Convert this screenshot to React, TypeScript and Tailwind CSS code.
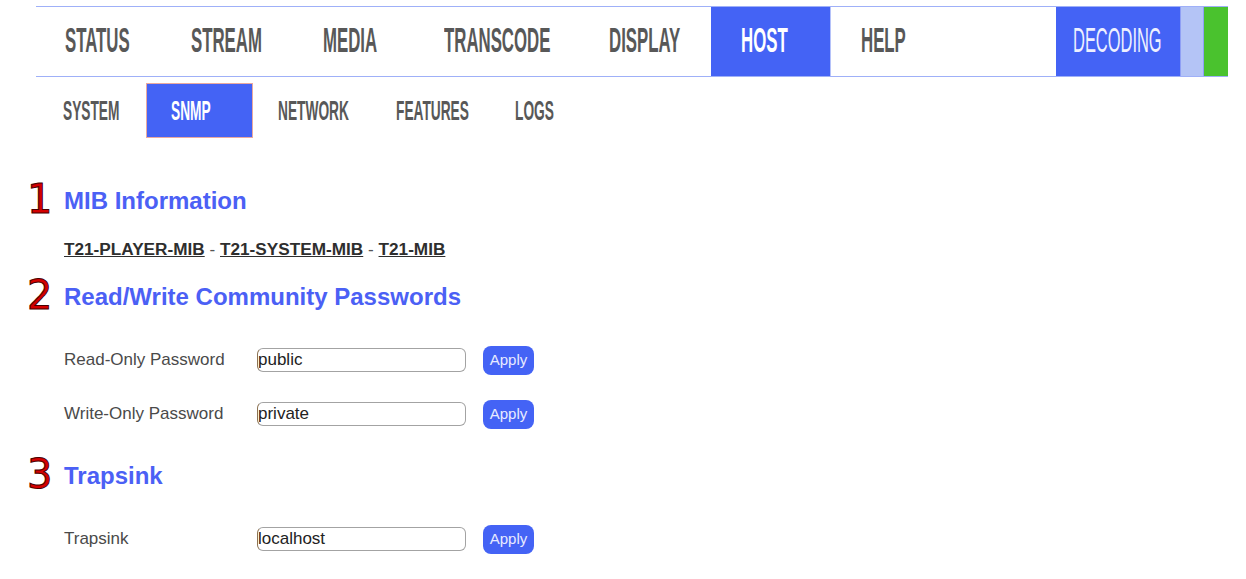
import type { ReactNode } from "react";

type NavItem = { label: string; width: string; pad: string; active?: boolean };

const topNav: NavItem[] = [
  { label: "STATUS", width: "w-[125px]", pad: "pl-[29px]" },
  { label: "STREAM", width: "w-[132px]", pad: "pl-[30px]" },
  { label: "MEDIA", width: "w-[121px]", pad: "pl-[30px]" },
  { label: "TRANSCODE", width: "w-[165px]", pad: "pl-[30px]" },
  { label: "DISPLAY", width: "w-[132px]", pad: "pl-[30px]" },
  { label: "HOST", width: "w-[119px]", pad: "pl-[30px]", active: true },
];

const subNav: NavItem[] = [
  { label: "SYSTEM", width: "w-[107px]", pad: "pl-[24px]" },
  { label: "SNMP", width: "w-[107px]", pad: "pl-[24px]", active: true },
  { label: "NETWORK", width: "w-[119px]", pad: "pl-[25px]" },
  { label: "FEATURES", width: "w-[119px]", pad: "pl-[24px]" },
  { label: "LOGS", width: "w-[83px]", pad: "pl-[24px]" },
];

function TopTab({ item }: { item: NavItem }) {
  return (
    <div
      className={`flex h-full shrink-0 items-center pb-[5px] ${item.width} ${item.pad} ${
        item.active ? "bg-[#4463f5] text-white" : "text-[#585858]"
      }`}
    >
      <span className="inline-block origin-left scale-x-[0.48] whitespace-nowrap text-[35px] font-bold leading-none">
        {item.label}
      </span>
    </div>
  );
}

function SubTab({ item }: { item: NavItem }) {
  return (
    <div
      className={`flex h-full shrink-0 items-center pt-[1px] ${item.width} ${item.pad} ${
        item.active
          ? "border border-[#eaa99f] bg-[#4463f5] text-white"
          : "text-[#585858]"
      }`}
    >
      <span className="inline-block origin-left scale-x-[0.49] whitespace-nowrap text-[28px] font-bold leading-none">
        {item.label}
      </span>
    </div>
  );
}

function SectionTitle({ num, children }: { num: string; children: ReactNode }) {
  return (
    <div className="flex h-[40px] items-center">
      <span className="w-[37px] pb-[4px] font-['DejaVu_Sans',sans-serif] text-[40px] leading-none text-[#d40000] [-webkit-text-stroke:1px_#4a0000]">
        {num}
      </span>
      <h2 className="text-[24px] font-bold text-[#4b60f5]">{children}</h2>
    </div>
  );
}

function FieldRow({ label, value }: { label: string; value: string }) {
  return (
    <div className="flex h-[30px] items-center pl-[37px]">
      <span className="w-[193px] text-[17px] text-[#4a4a4a]">{label}</span>
      <input
        readOnly
        value={value}
        className="h-[24px] w-[209px] rounded-[6px] border border-[#a3a3a3] border-l-[#8c7354] bg-white px-0 text-[17px] text-[#222] outline-none"
      />
      <button className="ml-[17px] h-[29px] w-[51px] rounded-[8px] bg-[#4463f5] text-[15px] text-[#e8ebff]">
        Apply
      </button>
    </div>
  );
}

export default function App() {
  return (
    <div className="h-[579px] w-[1246px] overflow-hidden bg-white font-['Liberation_Sans',Arial,sans-serif]">
      {/* main navigation */}
      <div className="ml-[36px] mt-[6px] flex h-[71px] w-[1192px] border-y border-[#9fb0f8]">
        {topNav.map((item) => (
          <TopTab key={item.label} item={item} />
        ))}
        <div className="flex h-full w-[226px] shrink-0 items-center border-l border-[#b5c2f9] pb-[5px] pl-[30px] text-[#585858]">
          <span className="inline-block origin-left scale-x-[0.48] text-[35px] font-bold leading-none">
            HELP
          </span>
        </div>
        <div className="flex h-full w-[124px] shrink-0 items-center bg-[#4463f5] pb-[5px] pl-[17px] text-[#eef0ff]">
          <span className="inline-block origin-left scale-x-[0.47] text-[35px] leading-none">
            DECODING
          </span>
        </div>
        <div className="h-full w-[24px] shrink-0 border-x border-[#8f9ff5] bg-[#b4c4f6]" />
        <div className="h-full w-[24px] shrink-0 bg-[#4ac22e]" />
      </div>

      {/* host sub navigation */}
      <div className="ml-[39px] mt-[6px] flex h-[55px]">
        {subNav.map((item) => (
          <SubTab key={item.label} item={item} />
        ))}
      </div>

      <div className="pl-[27px]">
        <div className="mt-[43px]">
          <SectionTitle num="1">MIB Information</SectionTitle>
        </div>
        <div className="mt-[18px] h-[20px] pl-[37px] text-[17.2px] leading-[20px] text-[#555]">
          <a className="font-bold text-[#2e2e2e] underline">T21-PLAYER-MIB</a> -{" "}
          <a className="font-bold text-[#2e2e2e] underline">T21-SYSTEM-MIB</a> -{" "}
          <a className="font-bold text-[#2e2e2e] underline">T21-MIB</a>
        </div>

        <div className="mt-[18px]">
          <SectionTitle num="2">Read/Write Community Passwords</SectionTitle>
        </div>
        <div className="mt-[28px]">
          <FieldRow label="Read-Only Password" value="public" />
        </div>
        <div className="mt-[24px]">
          <FieldRow label="Write-Only Password" value="private" />
        </div>

        <div className="mt-[27px]">
          <SectionTitle num="3">Trapsink</SectionTitle>
        </div>
        <div className="mt-[28px]">
          <FieldRow label="Trapsink" value="localhost" />
        </div>
      </div>
    </div>
  );
}
